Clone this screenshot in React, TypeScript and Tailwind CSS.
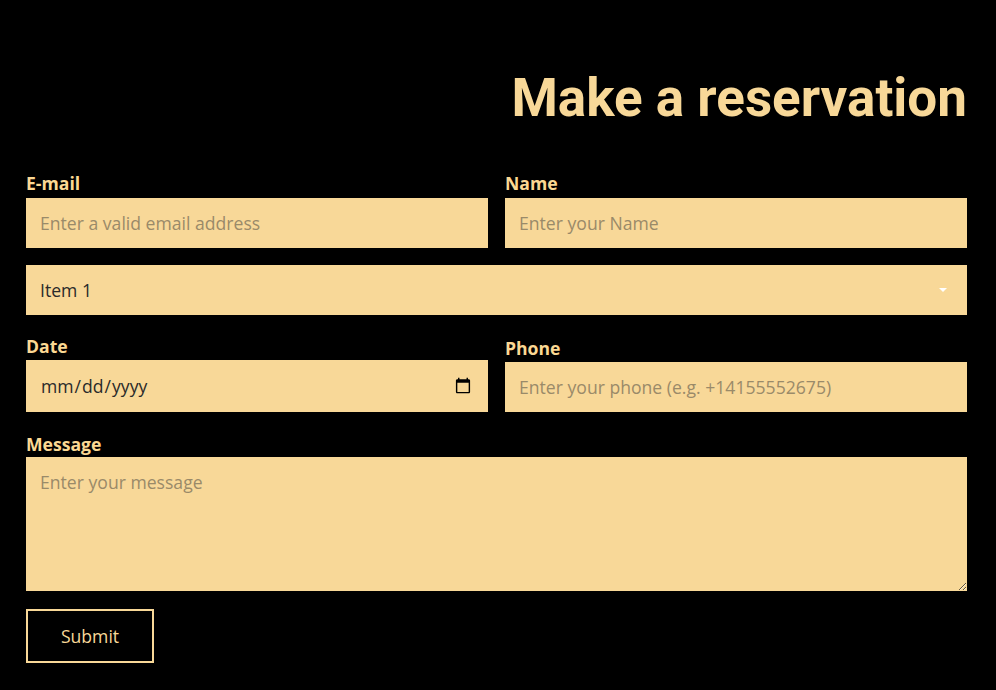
import React from 'react'

// Reservation form: dark page, pale amber fields
const fieldClass =
  "w-full h-[50px] bg-[#f8d898] px-[14px] text-[17.6px] text-[#2a2a2a] placeholder:text-[#9a8a69] outline-none border-0"

const labelClass = "block text-[17.6px] leading-[24px] font-bold text-[#fbd893]"

const App = () => {
  return (
    <div className="min-h-[690px] bg-black pl-[26px] pr-[29px] pt-[62px] font-['Open_Sans',sans-serif]">
      <h1 className="text-right font-['Roboto',sans-serif] font-bold text-[53px] leading-[72px] text-[#f8d898] mb-[37px]">
        Make a reservation
      </h1>

      <form className="flex flex-col">
        <div className="grid grid-cols-2 gap-[17px] mb-[17px]">
          <div>
            <label htmlFor="email" className={labelClass + " mb-[3px]"}>E-mail</label>
            <input id="email" type="email" placeholder="Enter a valid email address" className={fieldClass} />
          </div>
          <div>
            <label htmlFor="name" className={labelClass + " mb-[3px]"}>Name</label>
            <input id="name" type="text" placeholder="Enter your Name" className={fieldClass} />
          </div>
        </div>

        <div className="relative mb-[19px]">
          <select className={fieldClass + " appearance-none"} defaultValue="Item 1">
            <option>Item 1</option>
            <option>Item 2</option>
            <option>Item 3</option>
          </select>
          <span className="pointer-events-none absolute right-[20px] top-[23px] w-0 h-0 border-l-[4px] border-r-[4px] border-t-[4px] border-l-transparent border-r-transparent border-t-white" />
        </div>

        <div className="grid grid-cols-2 gap-[17px] items-end mb-[20px]">
          <div>
            <label htmlFor="date" className={labelClass + " mb-[2px]"}>Date</label>
            <input id="date" type="date" className={fieldClass + " h-[52px]"} />
          </div>
          <div>
            <label htmlFor="phone" className={labelClass + " mb-[2px]"}>Phone</label>
            <input id="phone" type="tel" placeholder="Enter your phone (e.g. +14155552675)" className={fieldClass} />
          </div>
        </div>

        <div className="mb-[18px]">
          <label htmlFor="message" className={labelClass + " mb-[1px]"}>Message</label>
          <textarea
            id="message"
            placeholder="Enter your message"
            className="block w-full h-[134px] bg-[#f8d898] px-[14px] py-[12px] text-[17.6px] text-[#2a2a2a] placeholder:text-[#9a8a69] outline-none border-0"
          />
        </div>

        <div>
          <button type="button" className="w-[128px] h-[54px] border-2 border-[#f8d898] text-[#f8d898] text-[17.6px] bg-black">
            Submit
          </button>
        </div>
      </form>
    </div>
  )
}

export default App
